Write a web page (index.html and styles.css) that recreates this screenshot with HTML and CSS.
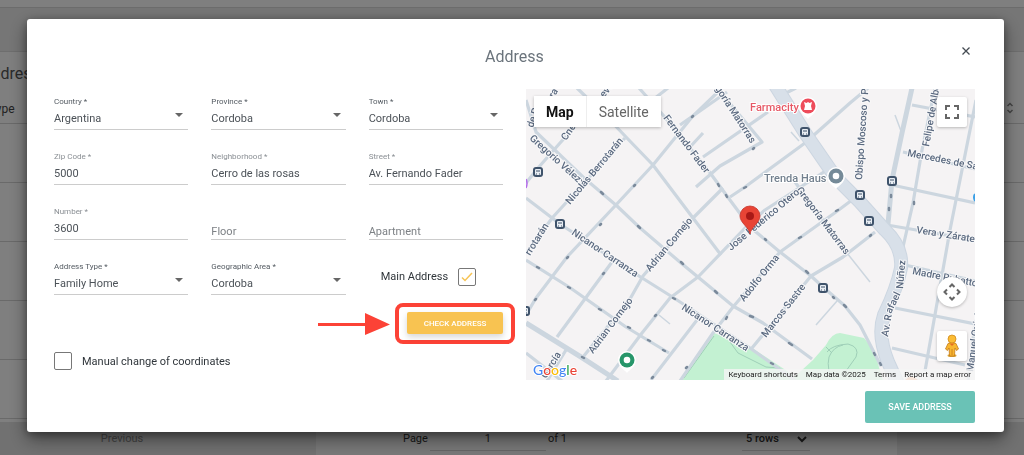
FILE: index.html
```html
<!DOCTYPE html>
<html lang="en">
<head>
<meta charset="utf-8">
<meta name="viewport" content="width=device-width, initial-scale=1">
<title>Address</title>
<link rel="stylesheet" href="styles.css">
</head>
<body>
<div class="page">
  <div class="topbar"></div>
  <div class="toolbar"></div>
  <main class="panel">
    <h1 class="panel-title">Address</h1>
    <table class="list">
      <thead><tr><th>Type</th><th class="sort"><svg width="8" height="12" viewBox="0 0 8 12" fill="none" stroke="#888" stroke-width="1.5"><path d="M1.5 4 4 1.5 6.500 4M1.5 8 4 10.500 6.500 8"/></svg></th></tr></thead>
      <tbody>
        <tr><td></td><td></td></tr>
        <tr><td></td><td></td></tr>
        <tr><td></td><td></td></tr>
        <tr><td></td><td></td></tr>
        <tr><td></td><td></td></tr>
      </tbody>
    </table>
  </main>
  <footer class="pager">
    <button class="pager-btn" type="button">Previous</button>
    <div class="pager-mid">
      <label class="pager-page">Page <input value="1" type="text"> <span>of 1</span></label>
      <select class="pager-rows" aria-label="Rows per page"><option>5 rows</option></select>
    </div>
    <button class="pager-btn" type="button" aria-label="Next"></button>
  </footer>
</div>

<div class="backdrop">
  <section class="dialog" role="dialog" aria-modal="true" aria-labelledby="dlg-title">
    <header class="dialog-head">
      <h2 id="dlg-title">Address</h2>
      <button class="close" type="button" aria-label="Close"><svg width="10" height="10" viewBox="0 0 10 10" fill="none" stroke="#444b52" stroke-width="1.3"><path d="M1.500 1.500 8.500 8.500M8.500 1.500 1.500 8.500"/></svg></button>
    </header>

    <div class="dialog-body">
      <form class="form">
        <div class="fields">
          <div class="field pick"><label for="country">Country *</label><select id="country"><option>Argentina</option></select></div>
          <div class="field pick"><label for="province">Province *</label><select id="province"><option>Cordoba</option></select></div>
          <div class="field pick"><label for="town">Town *</label><select id="town"><option>Cordoba</option></select></div>
          <div class="field"><label for="zip">Zip Code *</label><input id="zip" type="text" value="5000"></div>
          <div class="field"><label for="hood">Neighborhood *</label><input id="hood" type="text" value="Cerro de las rosas"></div>
          <div class="field"><label for="street">Street *</label><input id="street" type="text" value="Av. Fernando Fader"></div>
          <div class="field"><label for="number">Number *</label><input id="number" type="text" value="3600"></div>
          <div class="field blank"><input type="text" placeholder="Floor" aria-label="Floor"></div>
          <div class="field blank"><input type="text" placeholder="Apartment" aria-label="Apartment"></div>
          <div class="field pick"><label for="atype">Address Type *</label><select id="atype"><option>Family Home</option></select></div>
          <div class="field pick"><label for="area">Geographic Area *</label><select id="area"><option>Cordoba</option></select></div>
          <div class="main-address"><label for="main">Main Address</label>
            <span class="tick"><input id="main" type="checkbox" checked><svg width="12" height="10" viewBox="0 0 12 10" fill="none" stroke="#f7c455" stroke-width="1.500"><path d="M1 5.500 4 8.500 11 1"/></svg></span>
          </div>
        </div>
        <div class="check-row">
          <svg class="arrow" width="72" height="24" viewBox="0 0 72 24" fill="#fc4236"><path d="M0 11H47V1L72 12.500 47 23V14H0Z"/></svg>
          <div class="highlight"><button class="check-btn" type="button">CHECK ADDRESS</button></div>
        </div>
        <div class="manual"><span class="tick"><input id="manual" type="checkbox"></span><label for="manual">Manual change of coordinates</label></div>
      </form>

      <div class="map">
        <svg class="map-canvas" viewBox="526 89 449 291" preserveAspectRatio="xMidYMid slice" role="img" aria-label="Map">
          <rect x="526" y="89" width="449" height="291" fill="#f5f3f4"/>
          <g fill="#c3f1d2">
            <path d="M680 381 714 333 752 348 787 371 798 381Z"/>
            <path d="M790 381 813 360 826 345Q832 333 840 333L864 338 874 350 883 381Z"/>
          </g>
          <g fill="none" stroke="#9fcfb8" stroke-width="1">
            <path d="M684 378 714 336M730 342 738 353 766 367 780 368"/>
            <path d="M827 352Q832 345 848 344 860 347 856 357L846 371M826 347 832 353M834 381Q826 370 829 357 833 347 843 345"/>
          </g>
          <g fill="none" stroke="#ccd6df" stroke-width="3.200" stroke-linejoin="round">
            <path d="M526 100 536 132 583 177 617 206 639 227 681 263 733 306 763 323 812 359"/>
            <path d="M577 88 606 116 626 137 653 165 693 218 721 255"/>
            <path d="M639 88 663 115 708 170 727 196 750 227 780 252 811 276 823 287 845 306 860 325 881 366"/>
            <path d="M526 198 560 224 639 276 674 298 750 348 796 381"/>
            <path d="M526 260 569 287 626 327 669 353"/>
            <path d="M526 353 562 381M526 183 538 168 560 143 610 88M526 253 553 217 625 138"/>
            <path d="M526 315 536 298 567 257 615 206 653 165 692 117 721 89"/>
            <path d="M557 337 612 262M583 357 630 299 643 276 690 221 723 188"/>
            <path d="M547 381 566 350M606 381 642 333 670 298 698 277 747 226 765 210 830 168"/>
            <path d="M651 380 697 320M680 381 713 333 733 307 780 252 836 212 852 200"/>
            <path d="M752 348 811 276 843 257 875 232"/>
            <path d="M696 187 720 166 762 142 717 88M730 197 745 187 805 143 850 103 868 88"/>
            <path d="M703 157 768 112M680 125 727 92M690 147 703 133M782 95 796 88"/>
            <path d="M650 102 668 88M795 182 847 253"/>
            <path d="M912 105 975 117M903 152 975 169M892 185 975 203M887 225 975 240M905 265 975 281M895 308 975 324M892 348 965 365"/>
            <path d="M935 88 922 150 913 203 903 247M976 100 950 230 925 371M975 323 968 381"/>
          </g>
          <g fill="none" stroke="#ccd6df" stroke-width="1.500"><path d="M847 253 870 282M837 301 816 325M659 315 670 324M895 115 901 131M791 132 799 141"/></g>
          <g fill="none" stroke="#ccd6df" stroke-width="5"><path d="M526 323 581 357 618 381M912 88 902 133 892 180 887 235"/></g>
          <path d="M775 85 805 133 836 178 860 202 885 230Q903 247 901 268 897 288 884 315 877 335 888 362L898 384" fill="none" stroke="#ccd6e1" stroke-width="14"/>
          <path d="M775 85 805 133 836 178 860 202 885 230Q903 247 901 268 897 288 884 315 877 335 888 362L898 384" fill="none" stroke="#d8e0e9" stroke-width="12"/>
          <g fill="none" stroke="#7b8a9b" stroke-width="2.500" stroke-linecap="round">
            <path d="M601 192l2 2M638 226l2 2M681 262l2 2M715 291l2 2M750 316l3 1M789 343l3 2M537 267l2 1M568 287l2 1M599 309l2 1M628 327l2 1M648 340l2 1M663 350l2 1"/>
            <path d="M634 186l1-1M600 225l1-1M567 258l1-1M535 300l1-1M603 274l1-1M692 117l1-1M753 149l1-1M744 188l2-1M836 211l2-1M799 238l2-1M726 319l1-2M655 316l1-1M582 357l2 1M686 368l1-1M652 378l1-1M870 236l1-1"/>
            <path d="M718 184l1 2M726 195l1 2M765 239l1 1M806 271l2 2M833 297l1 1M844 305l2 2M874 353l1 2M880 363l1 2M673 298l2 1M771 363l2 1M891 195v2M889 208v2M914 204v-2"/>
          </g>
          <g class="street">
            <text transform="translate(529 139) rotate(42)">Gregorio Vélez</text>
            <text transform="translate(533 128) rotate(-72)">de P</text>
            <text transform="translate(551 103) rotate(-58)">era</text>
            <text transform="translate(566 141) rotate(-55)">Cne. Luis</text>
            <text transform="translate(604 98) rotate(-50)">eve</text>
            <text transform="translate(570 205) rotate(-50)">Nicolás Berrotarán</text>
            <text transform="translate(530 256) rotate(-58)">rrotarán</text>
            <text transform="translate(571 234) rotate(34)">Nicanor Carranza</text>
            <text transform="translate(681 309) rotate(33)">Nicanor Carranza</text>
            <text transform="translate(650 272) rotate(-50)">Adrian Cornejo</text>
            <text transform="translate(593 354) rotate(-53)">Adrian Cornejo</text>
            <text transform="translate(546 379) rotate(-58)">García</text>
            <text transform="translate(663 118) rotate(53)">Fernando Fader</text>
            <text transform="translate(712 84) rotate(57)">egoría Matorras</text>
            <text transform="translate(796 190) rotate(53)">Gregoría Matorras</text>
            <text transform="translate(731 251) rotate(-40)">Jose Federico Otero</text>
            <text transform="translate(744 302) rotate(-51)">Adolfo Orma</text>
            <text transform="translate(766 338) rotate(-52)">Marcos Sastre</text>
            <text transform="translate(862 180) rotate(-86)">Obispo Moscoso y Peralta</text>
            <text transform="translate(929 147) rotate(-80)">Felipe de Albear</text>
            <text transform="translate(907 156) rotate(11)">Mercedes de San</text>
            <text transform="translate(916 233) rotate(9)">Vera y Zárate</text>
            <text transform="translate(912 274) rotate(11)">Madre Rubatto</text>
            <text transform="translate(888 337) rotate(-80)">Av. R</text>
            <text transform="translate(891 314) rotate(-64)">afael</text>
            <text transform="translate(903 289) rotate(-85)">Núñez</text>
            <text transform="translate(973 372) rotate(-82)">Manuel Quintana</text>
          </g>
          <defs>
            <g id="stop"><rect x="-5" y="-5" width="10" height="10" rx="3" fill="#3f536b"/><rect x="-3" y="-3" width="6" height="6" rx="1" fill="#e8edf3"/><path d="M-2 -1H2M-2 2H-1M1 2H2" stroke="#3f536b"/></g>
            <path id="pin" d="M0 13C-2 10-9 7-9 0A9 9 0 0 1 9 0C9 7 2 10 0 13Z"/>
          </defs>
          <use href="#stop" x="538" y="172"/><use href="#stop" x="560" y="224"/><use href="#stop" x="805" y="132"/><use href="#stop" x="892" y="181"/><use href="#stop" x="860" y="195"/><use href="#stop" x="869" y="221"/><use href="#stop" x="823" y="288"/><use href="#stop" x="525" y="311"/>
          <g class="place">
            <text x="750" y="111" fill="#e65966">Farmacity</text>
            <text x="764" y="182" fill="#73808e">Trenda Haus</text>
          </g>
          <g transform="translate(808 106)"><use href="#pin" fill="#fff"/><circle r="7.500" fill="#ee4c5b"/><path d="M-4-4-1.500-3 0-4 1.500-3 4-4 3 0 4 4H-4L-3 0Z" fill="#fff"/></g>
          <g transform="translate(836 176)"><use href="#pin" fill="#fff"/><circle r="7.500" fill="#758a98"/><circle r="3.300" fill="#fff"/></g>
          <g transform="translate(627 360)"><use href="#pin" fill="#fff"/><circle r="7.500" fill="#27966a"/><circle r="3.300" fill="#fff"/></g>
          <path d="M750 234C749 227 740 223 740 216A10 10 0 0 1 760 216C760 223 751 227 750 234Z" fill="#e84435" stroke="#c5352b" stroke-width=".8"/><circle cx="750" cy="216" r="4" fill="#a81916"/>
          <path d="M526 179Q528 183 526 188" fill="none" stroke="#b36bea" stroke-width="1.500"/>
          <path d="M975 194Q973 197 975 201" fill="none" stroke="#3ca0e6" stroke-width="2"/>
          <path d="M905 380Q911 373 918 380" fill="#f3a374"/>
          <text class="google" x="533" y="375"><tspan fill="#4285f4">G</tspan><tspan fill="#ea4335">o</tspan><tspan fill="#fbbc04">o</tspan><tspan fill="#4285f4">g</tspan><tspan fill="#34a853">l</tspan><tspan fill="#ea4335">e</tspan></text>
        </svg>
        <div class="map-type"><button class="on" type="button">Map</button><button type="button">Satellite</button></div>
        <button class="map-btn full" type="button" aria-label="Toggle fullscreen"><svg width="14" height="14" viewBox="0 0 14 14" fill="none" stroke="#666" stroke-width="2"><path d="M1 5V1H5M9 1H13V5M13 9V13H9M5 13H1V9"/></svg></button>
        <div class="map-side">
          <button class="map-btn round" type="button" aria-label="Map camera controls"><svg width="18" height="18" viewBox="0 0 18 18" fill="none" stroke="#666" stroke-width="2"><path d="M6.500 4 9 1.500 11.500 4M6.500 14 9 16.500 11.500 14M4 6.500 1.500 9 4 11.500M14 6.500 16.500 9 14 11.500"/></svg></button>
          <button class="map-btn" type="button" aria-label="Street View"><svg width="16" height="24" viewBox="0 0 16 24"><ellipse cx="8" cy="21.500" rx="4.500" ry="1.500" fill="#d8a43a"/><path d="M4 9.500Q8 7 12 9.500L14.500 15 12.500 16.500 11 14 10.500 22H5.500L5 14 3.500 16.500 1.500 15Z" fill="#f8b630" stroke="#c47a1b" stroke-width=".8"/><circle cx="8" cy="5" r="4" fill="#fbbc34" stroke="#d18a1d" stroke-width=".8"/><path d="M5.500 9.500 8 12 10.500 9.500Z" fill="#e36d22"/><path d="M8 15V21" stroke="#c47a1b" stroke-width=".8"/></svg></button>
        </div>
        <div class="legal"><button type="button">Keyboard shortcuts</button><span>Map data ©2025</span><a href="#terms">Terms</a><a href="#report">Report a map error</a></div>
      </div>
    </div>

    <footer class="dialog-foot"><button class="save" type="button">SAVE ADDRESS</button></footer>
  </section>
</div>
</body>
</html>
```
FILE: styles.css
```css
* { box-sizing: border-box; }
body { margin: 0; height: 100vh; overflow: hidden; font-family: Roboto, "Liberation Sans", sans-serif; font-size: 11px; color: #3c444b; }
button, input, select { font: inherit; color: inherit; border: 0; padding: 0; margin: 0; background: none; }

.page { min-height: 100vh; display: flex; flex-direction: column; background: #fff; }
.topbar { height: 8px; border-bottom: 1px solid #d8d8d8; }
.toolbar { height: 44px; background: #ececec; border-bottom: 1px solid #dcdcdc; }
.panel { flex: 1; }
.panel-title { margin: 12px 0 0 -19px; font-size: 16px; line-height: 20px; font-weight: 400; color: #555; }
.list { width: 100%; border-collapse: collapse; margin-top: 12px; }
.list th { height: 27px; padding: 0; text-align: left; font-size: 12px; font-weight: 400; color: #444; border-bottom: 1px solid #d4d4d4; }
.list th:first-child { text-indent: -11px; }
.list .sort { text-align: right; padding-right: 10px; }
.list td { height: 59px; padding: 0; border-bottom: 1px solid #d4d4d4; }
.pager { display: grid; grid-template-columns: 316px 1fr 127px; height: 33px; background: #f2f2f2; }
.pager-btn { background: #e2e2e2; color: #888; padding-right: 72px; }
.pager-mid { display: flex; justify-content: space-between; align-items: center; padding: 0 87px; color: #333; }
.pager-page { display: flex; align-items: center; gap: 2px; }
.pager-page input { width: 116px; height: 24px; text-align: center; border-bottom: 1px solid #ccc; }
.pager-rows { width: 68px; height: 24px; font-weight: 500; border-bottom: 1px solid #ccc; }

.backdrop { position: fixed; inset: 0; display: grid; padding: 19px 20px 22px 27px; background: rgba(0, 0, 0, .5); }
.dialog { align-self: start; background: #fff; border-radius: 3px; padding: 0 29px 9px 27px; box-shadow: 0 7px 18px rgba(0, 0, 0, .45), 0 2px 8px rgba(0, 0, 0, .3); }
.dialog-head { height: 70px; display: grid; grid-template-columns: 1fr auto 1fr; align-items: center; padding-top: 4px; }
.dialog-head h2 { grid-column: 2; margin: 0; font-size: 16px; font-weight: 400; color: #6b747c; }
.close { justify-self: end; width: 18px; height: 18px; display: grid; place-items: center; margin-bottom: 10px; }
.dialog-body { display: grid; grid-template-columns: 1fr 1fr; gap: 23px; }

.form { padding-top: 8px; min-width: 0; }
.fields { display: grid; grid-template-columns: repeat(3, 1fr); gap: 22px 23px; }
.field { display: grid; grid-template-rows: 10px 22px; height: 33px; border-bottom: 1px solid #ccc; position: relative; }
.field label { font-size: 8px; line-height: 10px; color: #8a8f94; }
.field input, .field select { width: 100%; min-width: 0; height: 22px; color: #4c5258; outline: none; }
.field select { appearance: none; }
.pick label { color: #545b62; }
.pick::after { content: ""; position: absolute; right: 5px; top: 16px; border: 4px solid transparent; border-top-color: #666; border-bottom: 0; }
.field.blank { grid-template-rows: 32px; }
.field.blank input { height: 32px; padding-top: 16px; }
.blank input::placeholder { color: #7d8185; opacity: 1; }
.main-address { display: flex; align-items: center; gap: 10px; height: 29px; padding-left: 12px; }
.main-address, .manual { color: #30363b; }
.tick { display: grid; place-items: center; width: 18px; height: 18px; }
.tick > * { grid-area: 1 / 1; }
.tick input { appearance: none; width: 18px; height: 18px; border: 1px solid #777; border-radius: 2px; background: #fff; }
.tick svg { z-index: 1; pointer-events: none; }
.check-row { display: flex; justify-content: flex-end; align-items: center; gap: 5px; margin: 8px -12px 0 0; }
.highlight { border: 4px solid #fc4236; border-radius: 8px; padding: 5px 8px 6px; }
.check-btn { display: block; width: 96px; height: 22px; border-radius: 2px; background: #f8c351; color: #fff; font-size: 8px; font-weight: 500; box-shadow: 0 3px 6px rgba(0, 0, 0, .16); }
.manual { display: flex; align-items: center; gap: 10px; margin-top: 8px; }

.map { position: relative; min-width: 0; height: 291px; overflow: hidden; }
.map-canvas { display: block; width: 100%; height: 100%; }
.street { font-size: 10px; font-weight: 500; fill: #5b6a80; stroke: #f8f8f9; stroke-width: 2px; paint-order: stroke; }
.place { font-size: 11px; font-weight: 500; stroke: #fff; stroke-width: 2px; paint-order: stroke; }
.google { font: 500 14px Lato, sans-serif; stroke: #fff; stroke-width: 2px; paint-order: stroke; }
.map-type { position: absolute; left: 8px; top: 7px; display: flex; height: 31px; background: #fff; box-shadow: 0 1px 3px rgba(0, 0, 0, .25); font-size: 14px; color: #666; }
.map-type button { padding: 0 12px; }
.map-type .on { font-weight: 700; color: #111; border-right: 1px solid #eee; }
.map-btn { display: grid; place-items: center; width: 30px; height: 30px; background: #fff; border-radius: 2px; box-shadow: 0 1px 3px rgba(0, 0, 0, .25); }
.full { position: absolute; right: 8px; top: 8px; }
.map-side { position: absolute; right: 8px; bottom: 19px; display: grid; gap: 24px; }
.round { border-radius: 50%; }
.legal { position: absolute; right: 0; bottom: 0; display: flex; gap: 8px; padding: 0 4px; height: 11px; line-height: 11px; font-size: 8px; color: #222; background: rgba(245, 245, 245, .8); }
.legal a { color: inherit; text-decoration: none; }
.legal button { line-height: 11px; }

.dialog-foot { display: flex; justify-content: flex-end; padding-top: 11px; }
.save { width: 110px; height: 32px; border-radius: 2px; background: #6ac2b6; color: #fff; font-size: 9px; font-weight: 500; }
```
